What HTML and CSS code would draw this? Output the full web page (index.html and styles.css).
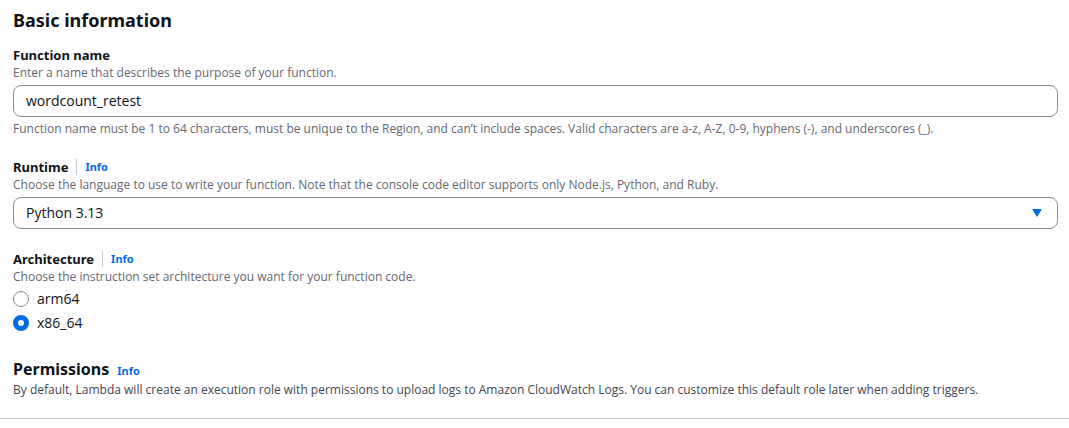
FILE: index.html
```html
<!DOCTYPE html>
<html lang="en">
<head>
<meta charset="utf-8">
<title>Basic information</title>
<link rel="stylesheet" href="styles.css">
</head>
<body>
<form class="panel">
  <h2 class="title">Basic information</h2>
  <div class="field">
    <label class="label" for="fname">Function name</label>
    <p class="hint">Enter a name that describes the purpose of your function.</p>
    <input class="control" id="fname" type="text" value="wordcount_retest">
    <p class="hint constraint">Function name must be 1 to 64 characters, must be unique to the Region, and can’t include spaces. Valid characters are a-z, A-Z, 0-9, hyphens (-), and underscores (_).</p>
  </div>
  <div class="field">
    <div class="label-row"><label class="label" for="runtime">Runtime</label><a class="info divided" href="#">Info</a></div>
    <p class="hint">Choose the language to use to write your function. Note that the console code editor supports only Node.js, Python, and Ruby.</p>
    <div class="select">
      <select class="control" id="runtime"><option>Python 3.13</option></select>
      <svg class="caret" viewBox="0 0 10 8" aria-hidden="true"><path d="M.8.5h8.4L5 7.3z"/></svg>
    </div>
  </div>
  <div class="field" role="radiogroup" aria-labelledby="arch">
    <div class="label-row"><span class="label" id="arch">Architecture</span><a class="info divided" href="#">Info</a></div>
    <p class="hint">Choose the instruction set architecture you want for your function code.</p>
    <div class="radios">
      <label class="radio"><input type="radio" name="arch">arm64</label>
      <label class="radio"><input type="radio" name="arch" checked>x86_64</label>
    </div>
  </div>
  <section class="permissions">
    <div class="label-row heading-row"><h3 class="subtitle">Permissions</h3><a class="info" href="#">Info</a></div>
    <p class="hint dark">By default, Lambda will create an execution role with permissions to upload logs to Amazon CloudWatch Logs. You can customize this default role later when adding triggers.</p>
  </section>
</form>
</body>
</html>
```
FILE: styles.css
```css
* { box-sizing: border-box; }
body { margin: 0; background: #fff; color: #0f141a; font-family: "Noto Sans", "Open Sans", sans-serif; font-size: 13px; line-height: 20px; }
h2, h3, p { margin: 0; }
.panel { padding: 8px 11px 20px 13px; border-bottom: 1px solid #c6c6cd; }
.title { font-size: 18px; line-height: 24px; font-weight: 700; margin-bottom: 13px; }
.field { margin-bottom: 20px; }
.label { display: block; font-weight: 700; line-height: 20px; }
.label-row { display: flex; align-items: center; gap: 8px; }
.hint { color: #656871; font-family: "Open Sans", "Noto Sans", sans-serif; font-size: 12px; line-height: 16px; margin-bottom: 4px; }
.info { color: #006ce0; font-size: 11px; line-height: 16px; font-weight: 700; text-decoration: none; }
.divided { border-left: 1px solid #c6c6cd; padding-left: 8px; }
.control { display: block; width: 100%; height: 32px; padding: 0 12px 2px; border: 1px solid #8c8c94; border-radius: 8px; background: #fff; color: #0f141a; font-family: "Open Sans", "Noto Sans", sans-serif; font-size: 14px; appearance: none; }
.constraint { margin: 4px 0 0; }
.select { position: relative; }
.caret { position: absolute; right: 16px; top: 12px; width: 10px; height: 8px; fill: #006ce0; stroke: #006ce0; stroke-linejoin: round; pointer-events: none; }
.radios { display: grid; gap: 4px; justify-items: start; }
.radio { display: flex; align-items: center; gap: 8px; font-family: "Open Sans", "Noto Sans", sans-serif; font-size: 14px; }
.radio input { appearance: none; width: 16px; height: 16px; margin: 0; border: 1px solid #8c8c94; border-radius: 50%; background: #fff; }
.radio input:checked { border: 5px solid #006ce0; }
.permissions { padding-top: 4px; }
.heading-row { align-items: baseline; margin-bottom: 1px; }
.subtitle { font-size: 16px; line-height: 24px; }
.dark { color: #424650; margin: 0; }
```
